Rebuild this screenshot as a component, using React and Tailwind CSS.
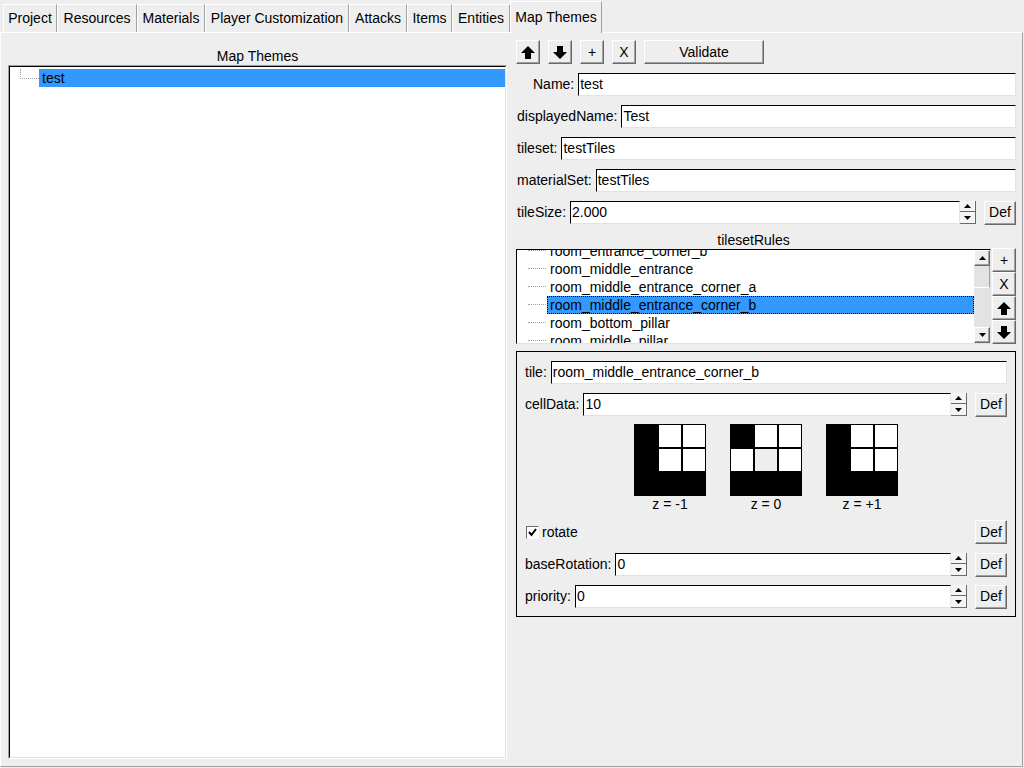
import React from "react";

const tabs = [
  { label: "Project", w: "w-[54px]" },
  { label: "Resources", w: "w-[80px]" },
  { label: "Materials", w: "w-[68px]" },
  { label: "Player Customization", w: "w-[144px]" },
  { label: "Attacks", w: "w-[58px]" },
  { label: "Items", w: "w-[45px]" },
  { label: "Entities", w: "w-[58px]" },
];

const raised =
  "bg-[#eeeeee] border-t border-l border-t-white border-l-white border-r border-b border-r-[#696969] border-b-[#696969] shadow-[inset_-1px_-1px_#a0a0a0]";

const sunken =
  "bg-white border-t border-l border-t-black border-l-black border-r border-b border-r-[#e3e3e3] border-b-[#e3e3e3]";

const ArrowUp = () => (
  <svg width="14" height="13" viewBox="0 0 14 13">
    <polygon points="7,0 14,7 10,7 10,13 4,13 4,7 0,7" fill="black" />
  </svg>
);

const ArrowDown = () => (
  <svg width="14" height="13" viewBox="0 0 14 13">
    <polygon points="4,0 10,0 10,6 14,6 7,13 0,6 4,6" fill="black" />
  </svg>
);

const Tri = ({ down }) => (
  <svg width="7" height="4" viewBox="0 0 7 4">
    <polygon points={down ? "0,0 7,0 3.5,4" : "0,4 7,4 3.5,0"} fill="black" />
  </svg>
);

const Btn = ({ children, className = "" }) => (
  <div className={`flex items-center justify-center ${raised} ${className}`}>{children}</div>
);

const Field = ({ value, className = "" }) => (
  <div className={`h-[23px] pl-[1px] leading-[21px] whitespace-nowrap overflow-hidden ${sunken} ${className}`}>
    {value}
  </div>
);

const Spinner = () => (
  <div className="w-[16px] h-[23px] flex flex-col bg-white">
    <div className="h-[11px] flex items-center justify-center bg-[#f4f4f4] border-r border-b border-[#696969]">
      <Tri />
    </div>
    <div className="h-[12px] flex items-center justify-center bg-[#f4f4f4] border-r border-b border-[#696969]">
      <Tri down />
    </div>
  </div>
);

const Def = ({ className = "" }) => (
  <Btn className={`w-[32px] h-[24px] ${className}`}>Def</Btn>
);

const Row = ({ label, value, spin, className = "" }) => (
  <div className={`flex items-center h-[23px] ${className}`}>
    <span className="mr-[4px] whitespace-nowrap">{label}</span>
    <Field value={value} className="flex-1" />
    {spin && (
      <>
        <Spinner />
        <Def className="ml-[8px]" />
      </>
    )}
  </div>
);

const rules = [
  "room_entrance_corner_b",
  "room_middle_entrance",
  "room_middle_entrance_corner_a",
  "room_middle_entrance_corner_b",
  "room_bottom_pillar",
  "room_middle_pillar",
];

// 0 = black, 1 = white, 2 = grey (center)
const grids = [
  { z: "z = -1", cells: [0, 1, 1, 0, 1, 1, 0, 0, 0] },
  { z: "z = 0", cells: [0, 1, 1, 1, 2, 1, 0, 0, 0] },
  { z: "z = +1", cells: [0, 1, 1, 0, 1, 1, 0, 0, 0] },
];

const cellColor = ["bg-black", "bg-white", "bg-[#eeeeee]"];

export default function App() {
  return (
    <div className="w-[1024px] h-[768px] bg-[#eeeeee] overflow-hidden text-[14px] text-black font-['Liberation_Sans',Arial,sans-serif]">
      {/* TABS */}
      <div className="h-[32px] flex items-end pl-[3px]">
        {tabs.map((t) => (
          <div
            key={t.label}
            className={`${t.w} h-[28px] flex items-center justify-center border-t border-l border-white border-r border-r-[#a0a0a0] whitespace-nowrap`}
          >
            {t.label}
          </div>
        ))}
        <div className="relative z-10 w-[92px] h-[32px] -mb-[1px] pb-[1px] flex items-center justify-center bg-[#eeeeee] border-t border-l border-white border-r border-r-[#a0a0a0] whitespace-nowrap">
          Map Themes
        </div>
      </div>

      {/* PANE */}
      <div className="w-[1023px] h-[735px] flex border-t border-l border-white border-r border-r-[#a0a0a0] border-b border-b-[#a0a0a0]">
        {/* LEFT: tree */}
        <div className="ml-[7px] w-[499px] pt-[14px] flex flex-col">
          <div className="h-[18px] leading-[18px] text-center">Map Themes</div>
          <div className="h-[694px] border-t border-l border-[#a0a0a0] border-r border-b border-r-white border-b-white">
            <div className="h-full bg-white border-t border-l border-black border-r border-b border-r-[#e3e3e3] border-b-[#e3e3e3] pt-[2px]">
              <div className="flex h-[18px]">
                <div className="ml-[10px] w-[19px] h-[10px] border-l border-b border-dotted border-[#a0a0a0]" />
                <div className="flex-1 bg-[#3399ff] pl-[3px] pt-[1px] leading-[17px]">test</div>
              </div>
            </div>
          </div>
        </div>

        {/* RIGHT: editor */}
        <div className="ml-[9px] w-[500px] pt-[7px] flex flex-col">
          <div className="flex gap-[8px] h-[24px]">
            <Btn className="w-[24px] h-[24px]"><ArrowUp /></Btn>
            <Btn className="w-[24px] h-[24px]"><ArrowDown /></Btn>
            <Btn className="w-[24px] h-[24px]">+</Btn>
            <Btn className="w-[24px] h-[24px]">X</Btn>
            <Btn className="w-[120px] h-[24px]">Validate</Btn>
          </div>

          <div className="mt-[9px] flex flex-col gap-[9px]">
            <Row label="Name:" value="test" className="pl-[17px]" />
            <Row label="displayedName:" value="Test" className="pl-[1px]" />
            <Row label="tileset:" value="testTiles" className="pl-[1px]" />
            <Row label="materialSet:" value="testTiles" className="pl-[1px]" />
            <Row label="tileSize:" value="2.000" spin className="pl-[1px]" />
          </div>

          {/* tilesetRules */}
          <div className="flex items-end mt-[7px]">
            <div className="w-[475px] flex flex-col">
              <div className="h-[18px] leading-[18px] text-center">tilesetRules</div>
              <div className={`h-[95px] flex ${sunken}`}>
                <div className="flex-1 overflow-hidden">
                  <div className="-mt-[8px]">
                    {rules.map((r, i) => (
                      <div key={r} className="flex h-[18px]">
                        <div className="ml-[11px] w-[18px] h-[9px] border-b border-dotted border-[#a0a0a0]" />
                        <div
                          className={`ml-[1px] flex-1 whitespace-nowrap ${
                            i === 3
                              ? "bg-[#3399ff] border border-dotted border-black pl-[2px] pt-[1px] leading-[15px]"
                              : "pl-[3px] pt-[1px] leading-[17px]"
                          }`}
                        >
                          {r}
                        </div>
                      </div>
                    ))}
                  </div>
                </div>
                <div className="w-[16px] flex flex-col bg-[#e3e3e3]">
                  <Btn className="h-[16px]"><Tri /></Btn>
                  <div className="h-[22px] border-b border-white border-r border-r-[#a0a0a0]" />
                  <div className="flex-1" />
                  <Btn className="h-[16px]"><Tri down /></Btn>
                </div>
              </div>
            </div>
            <div className="ml-[1px] w-[24px] flex flex-col">
              <Btn className="h-[24px]">+</Btn>
              <Btn className="h-[24px]">X</Btn>
              <Btn className="h-[24px]"><ArrowUp /></Btn>
              <Btn className="h-[24px]"><ArrowDown /></Btn>
            </div>
          </div>

          {/* rule details */}
          <div className="mt-[7px] border border-black pt-[9px] pl-[8px] pr-[8px] pb-[8px] flex flex-col">
            <Row label="tile:" value="room_middle_entrance_corner_b" />
            <Row label="cellData:" value="10" spin className="mt-[9px]" />

            <div className="mt-[8px] flex justify-center gap-[24px]">
              {grids.map((g) => (
                <div key={g.z} className="w-[72px] flex flex-col items-center">
                  <div className="bg-black p-[1px] grid grid-cols-[repeat(3,22px)] grid-rows-[repeat(3,22px)] gap-[2px]">
                    {g.cells.map((c, i) => (
                      <div key={i} className={cellColor[c]} />
                    ))}
                  </div>
                  <div className="h-[17px] leading-[17px]">{g.z}</div>
                </div>
              ))}
            </div>

            <div className="mt-[7px] h-[24px] flex items-center">
              <div className="ml-[1px] w-[13px] h-[13px] bg-white border-t border-l border-[#696969] border-r border-b border-r-white border-b-white flex items-center justify-center">
                <svg width="9" height="9" viewBox="0 0 9 9">
                  <polyline points="1,4 3.5,7 8,1" fill="none" stroke="black" strokeWidth="2" />
                </svg>
              </div>
              <span className="ml-[3px] flex-1">rotate</span>
              <Def />
            </div>

            <Row label="baseRotation:" value="0" spin className="mt-[9px]" />
            <Row label="priority:" value="0" spin className="mt-[9px]" />
          </div>
        </div>
      </div>
    </div>
  );
}
